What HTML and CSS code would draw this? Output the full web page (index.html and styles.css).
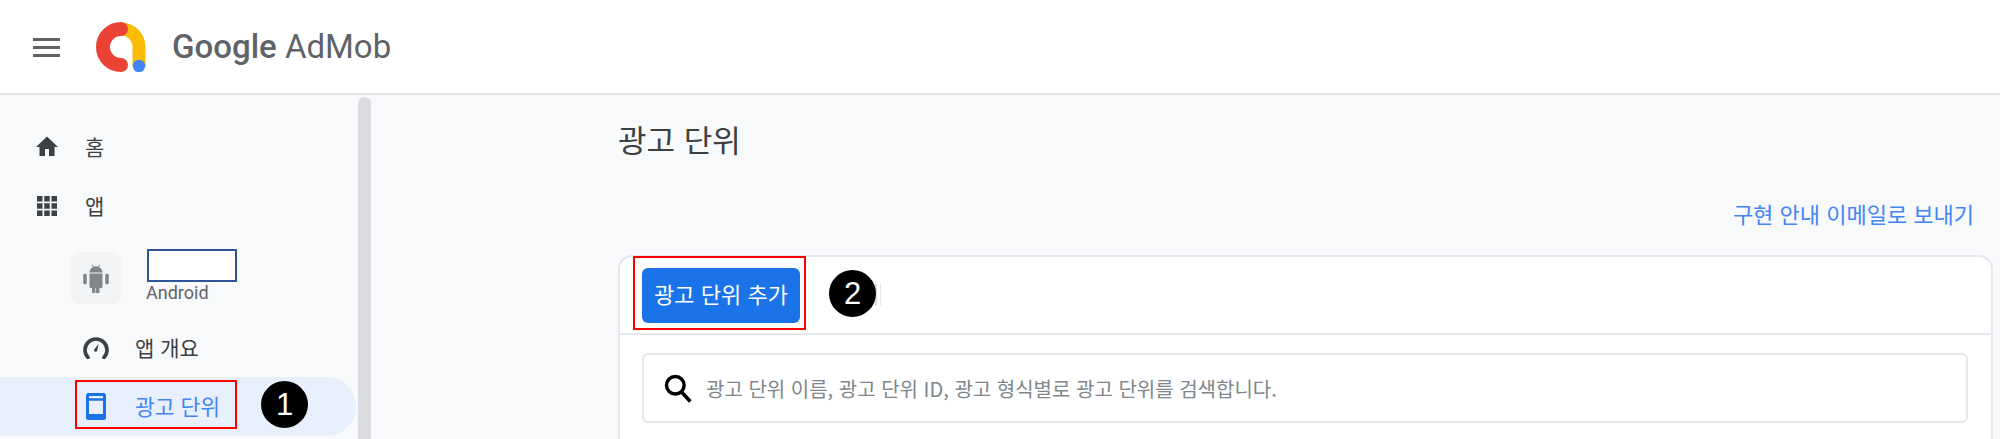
FILE: index.html
```html
<!DOCTYPE html>
<html lang="ko">
	<head>
		<meta charset="utf-8">
		<title>광고 단위</title>
		<link rel="stylesheet" href="styles.css">
	</head>
	<body>
		<header class="topbar">
			<svg class="menu-icon" viewBox="0 0 27 19"><path d="M0 1.5h27M0 9.5h27M0 17.5h27" stroke="#5f6368" stroke-width="3"/></svg>
			<svg class="logo" viewBox="0 0 50 50">
				<path d="M25 7A18 18 0 0 1 43 25V44" fill="none" stroke="#fbbc04" stroke-width="13"/>
				<path d="M25 7A18 18 0 0 0 25 43" fill="none" stroke="#ea4335" stroke-width="14" stroke-linecap="round"/>
				<circle cx="43" cy="44" r="6.2" fill="#4285f4"/>
			</svg>
			<div class="brand"><span class="brand-google">Google</span> AdMob</div>
		</header>

		<div class="content">
			<nav class="sidebar">
				<a class="nav-item">
					<svg class="nav-icon" viewBox="0 0 24 24"><path d="M10 21v-7h4v7h5.500v-9H23L12 1.500 1 12h3.500v9z" fill="#3c4043"/></svg>
					<span>홈</span>
				</a>
				<a class="nav-item">
					<svg class="nav-icon" viewBox="0 0 24 24"><path d="M2 2h5.500v5.500H2zM9.250 2h5.500v5.500h-5.500zM16.500 2H22v5.500h-5.500zM2 9.250h5.500v5.500H2zM9.250 9.250h5.500v5.500h-5.500zM16.500 9.250H22v5.500h-5.500zM2 16.500h5.500V22H2zM9.250 16.500h5.500V22h-5.500zM16.500 16.500H22V22h-5.500z" fill="#3c4043"/></svg>
					<span>앱</span>
				</a>
				<div class="app-row">
					<div class="app-tile">
						<svg viewBox="0 0 26 30"><path d="M6.500 10.500h13v13a1.500 1.500 0 0 1-1.500 1.500h-1.500v4a1.750 1.750 0 0 1-3.500 0v-4h-0.500v4a1.750 1.750 0 0 1-3.500 0v-4H8a1.500 1.500 0 0 1-1.500-1.500zM2 10.500a1.800 1.800 0 0 1 1.800 1.800v7.400a1.800 1.800 0 0 1-3.600 0v-7.400A1.800 1.800 0 0 1 2 10.500zM24 10.500a1.800 1.800 0 0 1 1.800 1.800v7.400a1.800 1.800 0 0 1-3.600 0v-7.400a1.800 1.800 0 0 1 1.800-1.800zM6.500 9.500C6.600 7 8 5 10 4L8.600 1.800l.6-.4L10.800 3.600a7 7 0 0 1 4.400 0L16.800 1.400l.6.4L16 4c2 1 3.400 3 3.500 5.500z" fill="#80868b"/></svg>
					</div>
					<div class="app-text">
						<div class="app-name"></div>
						<div class="app-platform">Android</div>
					</div>
				</div>
				<a class="nav-item sub">
					<svg class="nav-icon" viewBox="0 0 26 22"><path d="M5 20.500A11 11 0 1 1 21 20.500" fill="none" stroke="#3c4043" stroke-width="3.600" stroke-linecap="round"/><path d="M11.200 12.500l4.300-5.500-1.300 6.800a1.600 1.600 0 1 1-3-1.300z" fill="#3c4043"/></svg>
					<span>앱 개요</span>
				</a>
				<a class="nav-item sub active">
					<svg class="nav-icon" viewBox="0 0 20 27"><path d="M2.500 0h15A2.500 2.500 0 0 1 20 2.500v22a2.500 2.500 0 0 1-2.500 2.500h-15A2.500 2.500 0 0 1 0 24.500v-22A2.500 2.500 0 0 1 2.500 0zM3 3v18h14V3zM3 5.200h14v2.500H3z" fill="#1a73e8" fill-rule="evenodd"/></svg>
					<span>광고 단위</span>
				</a>
			</nav>
			<div class="scroll-thumb"></div>

			<main class="main">
				<h1 class="page-title">광고 단위</h1>
				<div class="link-row"><a class="email-link">구현 안내 이메일로 보내기</a></div>
				<section class="card">
					<div class="card-head">
						<button class="add-btn">광고 단위 추가</button>
						<span class="head-rule"></span>
					</div>
					<div class="card-body">
						<div class="search">
							<svg class="search-icon" viewBox="0 0 26 27"><circle cx="10.500" cy="10.500" r="8.200" fill="none" stroke="#000" stroke-width="3.200"/><path d="M16.500 17l8 8.500" stroke="#000" stroke-width="3.400"/></svg>
							<span>광고 단위 이름, 광고 단위 ID, 광고 형식별로 광고 단위를 검색합니다.</span>
						</div>
					</div>
				</section>
			</main>
		</div>

		<!-- tutorial markup drawn over the screenshot -->
		<div class="mark mark-nav"></div>
		<div class="mark mark-btn"></div>
		<div class="step step-1">1</div>
		<div class="step step-2">2</div>
	</body>
</html>
```

FILE: styles.css
```css
html, body {
	margin: 0;
	height: 439px;
	overflow: hidden;
}
body {
	position: relative;
	display: flex;
	flex-direction: column;
	background: #f8f9fb;
	color: #3c4043;
	font-family: "Noto Sans CJK KR", "Noto Sans", sans-serif;
}
a { text-decoration: none; }

.topbar {
	display: flex;
	align-items: center;
	flex: none;
	height: 93px;
	background: #fff;
	border-bottom: 2px solid #e3e3e8;
}
.menu-icon {
	width: 27px;
	height: 19px;
	margin-left: 33px;
	margin-top: 1px;
}
.logo {
	width: 50px;
	height: 50px;
	margin-left: 36px;
}
.brand {
	margin-left: 26px;
	font-family: "Roboto", sans-serif;
	font-size: 33px;
	color: #5f6368;
	white-space: nowrap;
}
.brand-google { font-weight: 500; }

.content {
	display: flex;
	flex: 1;
	min-height: 0;
}
.sidebar {
	flex: none;
	width: 356px;
	padding-top: 22px;
	margin-right: 2px;
	box-sizing: border-box;
}
.nav-item {
	display: flex;
	align-items: center;
	height: 59px;
	padding-left: 35px;
	font-size: 21px;
	color: #3c4043;
}
.nav-item span { margin-top: -2px; }
.nav-item .nav-icon {
	width: 24px;
	height: 24px;
	margin-right: 26px;
}
.nav-item.sub { padding-left: 83px; }
.nav-item.sub .nav-icon {
	width: 26px;
	height: 22px;
	margin-right: 26px;
}
.nav-item.active {
	background: #e8f0fe;
	border-radius: 0 30px 30px 0;
	font-size: 21.500px;
	color: #4285f4;
}
.nav-item.active .nav-icon {
	width: 20px;
	height: 27px;
	margin-left: 3px;
	margin-right: 29px;
}

.app-row {
	display: flex;
	align-items: center;
	height: 83px;
	padding-left: 70px;
	padding-top: 2px;
	box-sizing: border-box;
}
.app-tile {
	display: flex;
	align-items: center;
	justify-content: center;
	width: 52px;
	height: 52px;
	border-radius: 10px;
	background: #f1f3f4;
}
.app-tile svg {
	width: 26px;
	height: 30px;
}
.app-text {
	margin-left: 24px;
	margin-top: -2px;
}
.app-name {
	width: 86px;
	height: 29px;
	margin-left: 1px;
	background: #fff;
	border: 2px solid #2f5597;
}
.app-platform {
	font-family: "Roboto", sans-serif;
	font-size: 18px;
	line-height: 22px;
	color: #5f6368;
}

.scroll-thumb {
	flex: none;
	width: 13px;
	margin-top: 2px;
	background: #dadce0;
	border-radius: 6px 6px 0 0;
}

.main {
	display: flex;
	flex-direction: column;
	flex: 1;
	min-width: 0;
	padding: 0 7px 0 247px;
}
.page-title {
	margin: 25px 0 0;
	font-size: 31px;
	font-weight: 400;
	line-height: 38px;
	color: #3c4043;
}
.link-row {
	display: flex;
	justify-content: flex-end;
	margin-top: 40px;
	padding-right: 19px;
	line-height: 30px;
}
.email-link {
	font-size: 22px;
	color: #4285f4;
}
.card {
	flex: 1;
	margin-top: 27px;
	background: #fff;
	border: 2px solid #e6e7ec;
	border-bottom: 0;
	border-radius: 14px 14px 0 0;
}
.card-head {
	display: flex;
	align-items: center;
	height: 78px;
	padding-left: 22px;
	border-bottom: 2px solid #e6e7ec;
	box-sizing: border-box;
}
.add-btn {
	width: 158px;
	height: 55px;
	padding: 0 0 5px;
	border: 0;
	border-radius: 6px;
	background: #1a73e8;
	color: #fff;
	font-family: inherit;
	font-size: 22px;
}
.head-rule {
	width: 3px;
	height: 22px;
	margin-left: 75px;
	border-left: 2px solid #dadce0;
	border-right: 1px solid #e6e7ec;
}
.card-body {
	padding: 18px 23px 0 22px;
}
.search {
	display: flex;
	align-items: center;
	height: 70px;
	box-sizing: border-box;
	padding-left: 21px;
	border: 2px solid #e6e7ec;
	border-radius: 6px;
	font-size: 20px;
	color: #80868b;
}
.search-icon {
	width: 28px;
	height: 29px;
	margin-left: -1px;
	margin-right: 14px;
	margin-top: 1px;
}

.mark {
	position: absolute;
	box-sizing: border-box;
	border: 2px solid #f00;
}
.mark-nav {
	left: 75px;
	top: 380px;
	width: 162px;
	height: 49px;
}
.mark-btn {
	left: 633px;
	top: 256px;
	width: 173px;
	height: 74px;
}
.step {
	position: absolute;
	width: 47px;
	height: 47px;
	border-radius: 50%;
	background: #000;
	color: #fff;
	font-family: "Liberation Sans", sans-serif;
	font-size: 31px;
	line-height: 47px;
	text-align: center;
}
.step-1 {
	left: 261px;
	top: 381px;
}
.step-2 {
	left: 829px;
	top: 270px;
}
```
